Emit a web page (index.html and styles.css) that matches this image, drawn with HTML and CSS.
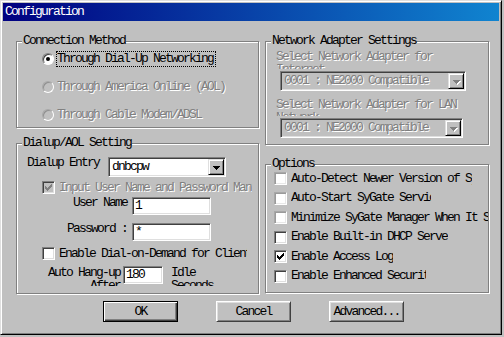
FILE: index.html
```html
<!DOCTYPE html>
<html lang="en">

<head>
    <meta charset="UTF-8">
    <title>Configuration</title>
    <link rel="stylesheet" href="styles.css">
</head>

<body>
    <div class="window">
        <div class="titlebar">Configuration</div>
        <div class="content">
            <div class="columns">
                <div class="column left">
                    <div class="group conn">
                        <span class="group-title">Connection Method</span>
                        <div class="option"><span class="radio checked"></span><span class="focus">Through Dial-Up Networking</span></div>
                        <div class="option disabled"><span class="radio"></span><span class="label">Through America Online (AOL)</span></div>
                        <div class="option disabled"><span class="radio"></span><span class="label">Through Cable Modem/ADSL</span></div>
                    </div>

                    <div class="group dialup">
                        <span class="group-title">Dialup/AOL Setting</span>
                        <div class="field-row entry">
                            <span class="field-label">Dialup Entry</span>
                            <div class="combo entry-combo">
                                <span class="combo-text">dnbcpw</span>
                                <span class="combo-btn"><svg width="7" height="4" viewBox="0 0 7 4"><path d="M0 0h7v1h-7zM1 1h5v1h-5zM2 2h3v1h-3zM3 3h1v1h-1z"/></svg></span>
                            </div>
                        </div>
                        <div class="check-row disabled manual">
                            <span class="check checked"><svg width="7" height="7" viewBox="0 0 7 7"><path d="M6 0h1v1h-1zM5 1h2v1h-2zM0 2h1v1h-1zM4 2h3v1h-3zM0 3h2v1h-2zM3 3h3v1h-3zM0 4h5v1h-5zM1 5h3v1h-3zM2 6h1v1h-1z"/></svg></span>
                            <span class="check-text">Input User Name and Password Manually</span>
                        </div>
                        <div class="field-row user">
                            <span class="field-label right">User Name</span>
                            <div class="edit">1</div>
                        </div>
                        <div class="field-row pass">
                            <span class="field-label right">Password :</span>
                            <div class="edit">*</div>
                        </div>
                        <div class="check-row demand">
                            <span class="check"></span>
                            <span class="check-text">Enable Dial-on-Demand for Clients</span>
                        </div>
                        <div class="field-row hangup">
                            <span class="wrap-label right">Auto Hang-up After</span>
                            <div class="edit short">180</div>
                            <span class="wrap-label idle">Idle Seconds</span>
                        </div>
                    </div>
                </div>

                <div class="column right">
                    <div class="group network">
                        <span class="group-title">Network Adapter Settings</span>
                        <div class="adapter-label disabled">Select Network Adapter for Internet</div>
                        <div class="combo adapter disabled">
                            <span class="combo-text">0001 : NE2000 Compatible</span>
                            <span class="combo-btn"><svg width="7" height="4" viewBox="0 0 7 4"><path d="M0 0h7v1h-7zM1 1h5v1h-5zM2 2h3v1h-3zM3 3h1v1h-1z"/></svg></span>
                        </div>
                        <div class="adapter-label second disabled">Select Network Adapter for LAN Network</div>
                        <div class="combo adapter second disabled">
                            <span class="combo-text">0001 : NE2000 Compatible</span>
                            <span class="combo-btn"><svg width="7" height="4" viewBox="0 0 7 4"><path d="M0 0h7v1h-7zM1 1h5v1h-5zM2 2h3v1h-3zM3 3h1v1h-1z"/></svg></span>
                        </div>
                    </div>

                    <div class="group options">
                        <span class="group-title">Options</span>
                        <div class="check-row"><span class="check faint"></span><span class="check-text opt-detect">Auto-Detect Newer Version of SyGate</span></div>
                        <div class="check-row"><span class="check faint"></span><span class="check-text opt-start">Auto-Start SyGate Services</span></div>
                        <div class="check-row"><span class="check faint"></span><span class="check-text opt-minimize">Minimize SyGate Manager When It Starts</span></div>
                        <div class="check-row"><span class="check"></span><span class="check-text opt-dhcp">Enable Built-in DHCP Server</span></div>
                        <div class="check-row">
                            <span class="check checked"><svg width="7" height="7" viewBox="0 0 7 7"><path d="M6 0h1v1h-1zM5 1h2v1h-2zM0 2h1v1h-1zM4 2h3v1h-3zM0 3h2v1h-2zM3 3h3v1h-3zM0 4h5v1h-5zM1 5h3v1h-3zM2 6h1v1h-1z"/></svg></span>
                            <span class="check-text">Enable Access Log</span>
                        </div>
                        <div class="check-row"><span class="check"></span><span class="check-text opt-security">Enable Enhanced Security</span></div>
                    </div>
                </div>
            </div>

            <div class="buttons">
                <button class="btn default">OK</button>
                <button class="btn">Cancel</button>
                <button class="btn">Advanced...</button>
            </div>
        </div>
    </div>
</body>

</html>
```

FILE: styles.css
```css
body {
    margin: 0;
    background: #c0c0c0;
    font-family: "Liberation Mono", "DejaVu Sans Mono", monospace;
    font-size: 13px;
    line-height: 12px;
    letter-spacing: -1.8px;
    color: #000;
}

.window {
    width: 502px;
    height: 335px;
    box-sizing: border-box;
    padding: 2px;
    background: #c0c0c0;
    border: 1px solid;
    border-color: #dfdfdf #000 #000 #dfdfdf;
    box-shadow: inset 1px 1px 0 #fff, inset -1px -1px 0 #808080;
}

.titlebar {
    height: 18px;
    line-height: 18px;
    padding-left: 2px;
    color: #fff;
    background: linear-gradient(90deg, #000080, #1084d0);
}

.content {
    padding: 20px 0 0 13px;
}

.columns {
    display: flex;
    gap: 6px;
}

.column {
    display: flex;
    flex-direction: column;
}

.column.left {
    width: 243px;
    gap: 15px;
}

.column.right {
    width: 224px;
    gap: 19px;
}

/* etched group box */
.group {
    position: relative;
    box-sizing: border-box;
    border: 1px solid #808080;
    box-shadow: 1px 1px 0 #fff, inset 1px 1px 0 #fff;
}

.group-title {
    position: absolute;
    top: -7px;
    left: 5px;
    padding: 0 1px;
    background: #c0c0c0;
    white-space: nowrap;
}

.disabled,
.disabled .combo-text {
    color: #808080;
    text-shadow: 1px 1px 0 #fff;
}

/* connection method */
.conn {
    height: 87px;
    padding: 9px 0 0 25px;
    display: flex;
    flex-direction: column;
    gap: 12px;
}

.option {
    display: flex;
    align-items: center;
    height: 16px;
    white-space: nowrap;
}

.radio {
    position: relative;
    flex: none;
    width: 12px;
    height: 12px;
    box-sizing: border-box;
    margin-right: 2px;
    border-radius: 50%;
    border: 1px solid;
    border-color: #808080 #fff #fff #808080;
    box-shadow: inset 1px 1px 0 #404040;
    background: #fff;
}

.disabled .radio {
    background: #c0c0c0;
    border-color: #a8a8a8 #fff #fff #a8a8a8;
    box-shadow: inset 1px 1px 0 #909090;
}

.radio.checked::after {
    content: "";
    position: absolute;
    left: 3px;
    top: 3px;
    width: 4px;
    height: 4px;
    border-radius: 50%;
    background: #000;
}

.focus {
    line-height: 14px;
    padding-right: 2px;
    border: 1px dotted #000;
}

.option .label {
    padding-left: 1px;
}

/* dialup settings */
.dialup {
    height: 151px;
    padding: 13px 0 0 10px;
}

.field-row {
    display: flex;
    align-items: flex-start;
}

.field-label {
    flex: none;
    width: 81px;
    white-space: nowrap;
}

.field-label.right {
    width: 105px;
    box-sizing: border-box;
    padding-right: 5px;
    text-align: right;
}

.entry {
    height: 20px;
}

.combo {
    display: flex;
    box-sizing: border-box;
    height: 20px;
    padding: 1px;
    background: #fff;
    border: 1px solid;
    border-color: #808080 #fff #fff #808080;
    box-shadow: inset 1px 1px 0 #404040, inset -1px -1px 0 #dfdfdf;
}

.combo.disabled {
    background: #c0c0c0;
}

.entry-combo {
    width: 118px;
}

.combo-text {
    flex: 1;
    padding-left: 2px;
    line-height: 16px;
    overflow: hidden;
    white-space: nowrap;
}

.combo-btn {
    flex: none;
    display: flex;
    align-items: center;
    justify-content: center;
    width: 16px;
    height: 16px;
    box-sizing: border-box;
    background: #c0c0c0;
    border: 1px solid;
    border-color: #dfdfdf #000 #000 #dfdfdf;
    box-shadow: inset 1px 1px 0 #fff, inset -1px -1px 0 #808080;
}

.combo-btn svg {
    fill: #000;
    margin-top: 1px;
}

.disabled .combo-btn svg {
    fill: #808080;
    filter: drop-shadow(1px 1px 0 #fff);
}

.check-row {
    display: flex;
    align-items: center;
    height: 13px;
}

.check {
    flex: none;
    display: flex;
    align-items: center;
    justify-content: center;
    width: 13px;
    height: 13px;
    box-sizing: border-box;
    margin-right: 4px;
    background: #fff;
    border: 1px solid;
    border-color: #808080 #fff #fff #808080;
    box-shadow: inset 1px 1px 0 #404040, inset -1px -1px 0 #dfdfdf;
}

.check.faint {
    border-color: #a8a8a8 #fff #fff #a8a8a8;
    box-shadow: inset 1px 1px 0 #9a9a9a, inset -1px -1px 0 #e8e8e8;
}

.check svg {
    fill: #000;
}

.disabled .check {
    background: #c0c0c0;
}

.disabled .check svg {
    fill: #808080;
}

.check-text {
    overflow: hidden;
    white-space: nowrap;
}

.manual {
    margin: 4px 0 0 15px;
}

.manual .check-text {
    width: 193px;
}

.user {
    margin-top: 3px;
    height: 18px;
}

.pass {
    margin-top: 8px;
    height: 18px;
}

.edit {
    flex: none;
    width: 79px;
    height: 18px;
    box-sizing: border-box;
    padding: 2px 0 0 2px;
    background: #fff;
    border: 1px solid;
    border-color: #808080 #fff #fff #808080;
    box-shadow: inset 1px 1px 0 #404040, inset -1px -1px 0 #dfdfdf;
}

.edit.short {
    width: 40px;
}

.demand {
    margin: 6px 0 0 15px;
}

.demand .check-text {
    width: 188px;
}

.hangup {
    margin-top: 6px;
    height: 22px;
}

/* wrapped labels whose second line is cut by the control height */
.wrap-label {
    flex: none;
    height: 20px;
    line-height: 13px;
    overflow: hidden;
}

.wrap-label.right {
    width: 96px;
    box-sizing: border-box;
    padding-right: 3px;
    text-align: right;
}

.wrap-label.idle {
    width: 54px;
    margin-left: 8px;
}

/* network adapters */
.network {
    height: 104px;
    padding: 8px 0 0 10px;
}

.adapter-label {
    width: 192px;
    height: 19px;
    line-height: 13px;
    overflow: hidden;
}

.adapter-label.second {
    margin-top: 7px;
    height: 18px;
}

.combo.adapter {
    width: 186px;
    margin: 2px 0 0 4px;
}

.combo.adapter.second {
    width: 183px;
}

/* options */
.options {
    height: 129px;
    padding: 7px 0 0 8px;
    display: flex;
    flex-direction: column;
    gap: 6.5px;
}

.opt-detect {
    width: 181px;
}

.opt-start {
    width: 140px;
}

.opt-minimize {
    width: 197px;
}

.opt-dhcp {
    width: 157px;
}

.opt-security {
    width: 135px;
}

/* dialog buttons */
.buttons {
    display: flex;
    gap: 38px;
    margin: 7px 0 0 87px;
}

.btn {
    width: 75px;
    height: 21px;
    box-sizing: border-box;
    padding: 0;
    font: inherit;
    letter-spacing: inherit;
    color: #000;
    background: #c0c0c0;
    border: 1px solid;
    border-color: #fff #404040 #404040 #fff;
    box-shadow: inset 1px 1px 0 #dfdfdf, inset -1px -1px 0 #808080;
}

.btn.default {
    border-color: #000;
    box-shadow: inset 1px 1px 0 #fff, inset -1px -1px 0 #404040, inset -2px -2px 0 #808080;
}
```
